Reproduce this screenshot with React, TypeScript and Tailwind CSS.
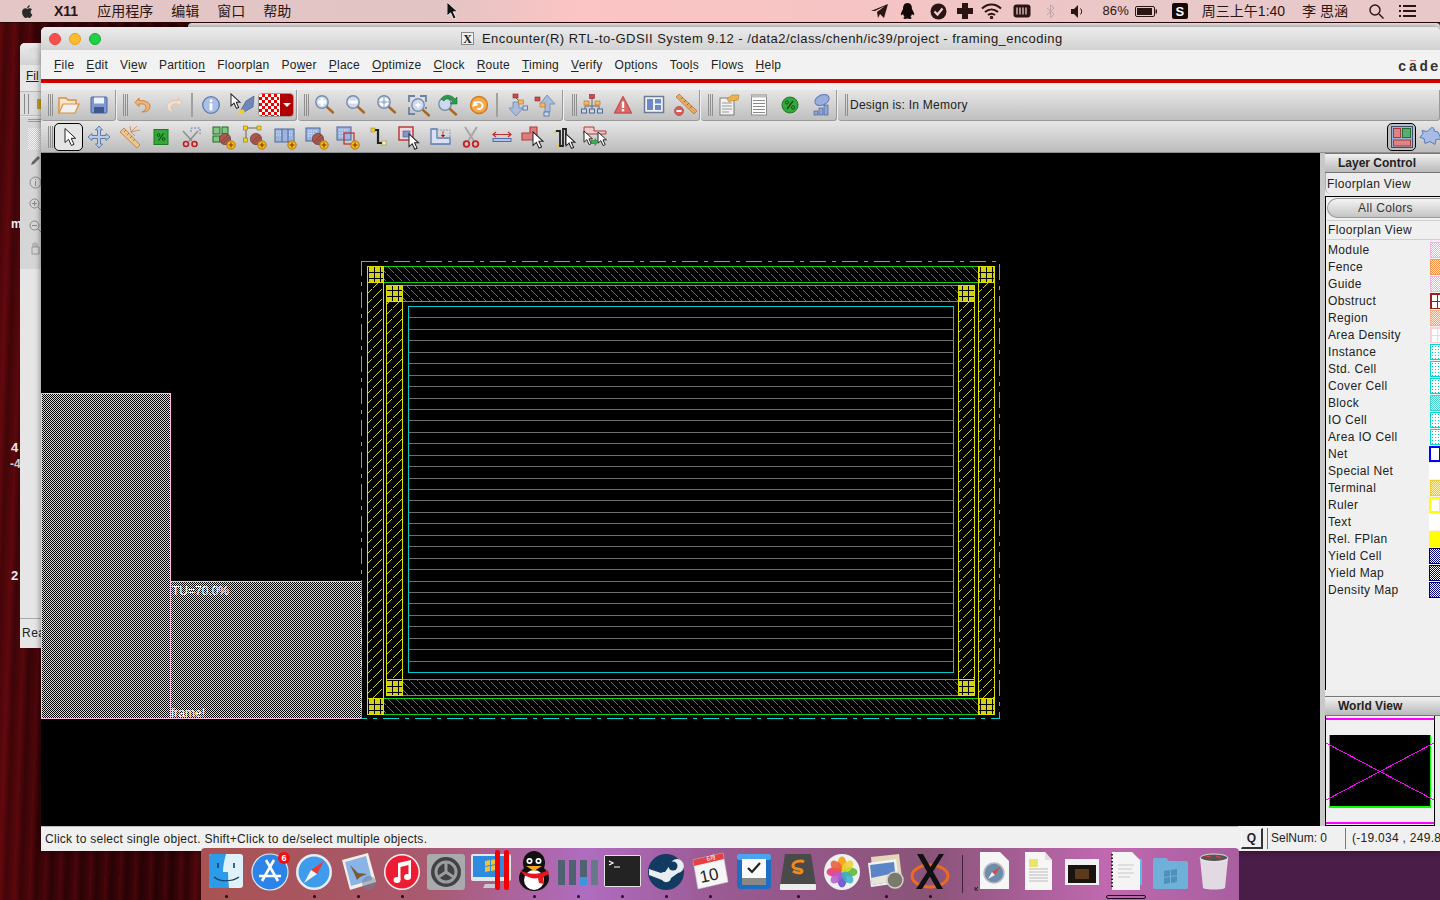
import React, { ReactNode } from 'react';

// shared mouse arrow used in several toolbar glyphs
const arrow = 'M0 0 L0 14 L3.6 10.8 L6.4 17 L9 15.8 L6.2 9.8 L10.6 9.8 Z';

function Cursor({ x, y, s = 1 }: { x: number; y: number; s?: number }) {
  return <path d={arrow} transform={`translate(${x} ${y}) scale(${s})`} fill="#fff" stroke="#222" strokeWidth={1 / s} />;
}

function Plus({ x, y }: { x: number; y: number }) {
  return (
    <g>
      <circle cx={x} cy={y} r="4.2" fill="#f5b915" stroke="#a8620c" strokeWidth="0.8" />
      <path d={`M${x - 2.4} ${y}h4.8M${x} ${y - 2.4}v4.8`} stroke="#7a3f05" strokeWidth="1.1" />
    </g>
  );
}

function Ball({ x = 14, y = 14 }: { x?: number; y?: number }) {
  return (
    <g>
      <circle cx={x} cy={y} r="5.6" fill="#a85a50" stroke="#6d3530" strokeWidth="0.7" />
      <path d={`M${x - 4} ${y + 3}L${x + 3} ${y - 4}M${x - 2} ${y + 4.5}L${x + 4.5} ${y - 2}`} stroke="#7c3a33" strokeWidth="0.8" />
    </g>
  );
}

function Glass({ x = 10, y = 9, children }: { x?: number; y?: number; children?: ReactNode }) {
  return (
    <g>
      <path d={`M${x + 5} ${y + 5}L${x + 11} ${y + 10.5}`} stroke="#a8681f" strokeWidth="2.4" strokeLinecap="round" />
      <circle cx={x} cy={y} r="6.2" fill="#cbdaf0" stroke="#7a8ca8" strokeWidth="1.4" />
      {children}
    </g>
  );
}

const icons: Record<string, ReactNode> = {
  open: (
    <g>
      <path d="M3 20V5h7l2 2h8v4" fill="#fde7c8" stroke="#dd8f3a" strokeWidth="1.4" />
      <path d="M3 20L7 11H23L19 20Z" fill="#eef0f4" stroke="#dd8f3a" strokeWidth="1.2" />
    </g>
  ),
  save: (
    <g>
      <rect x="4" y="4" width="16" height="16" rx="1" fill="#7e98d2" stroke="#4f659c" />
      <rect x="7" y="4.5" width="10" height="6" fill="#eef2fa" />
      <rect x="7" y="14" width="10" height="6" fill="#3f5690" />
    </g>
  ),
  undo: <path d="M8 5L4 9.5 8 13.5V11c5-.6 7 1 7 3.5 0 2-1.4 3.5-4 4.5 5 .2 8-2 8-5.500 0-4-4.400-6.500-11-6V5Z" fill="#eeb37a" stroke="#c77a35" strokeWidth="0.9" />,
  redo: <path d="M16 5l4 4.500L16 13.500V11c-5-.6-7 1-7 3.500 0 2 1.400 3.500 4 4.500-5 .2-8-2-8-5.500 0-4 4.400-6.500 11-6V5Z" fill="#f3dfcd" stroke="#dcc0a6" strokeWidth="0.9" />,
  info: (
    <g>
      <circle cx="12" cy="12" r="8.300" fill="#a9bfe6" stroke="#5f78ad" strokeWidth="1.300" />
      <circle cx="12" cy="7.800" r="1.500" fill="#fff" />
      <rect x="10.600" y="10.300" width="2.800" height="7" fill="#fff" />
    </g>
  ),
  pen: (
    <g>
      <Cursor x={1} y={1} s={0.85} />
      <path d="M24 3L16 8l-5 9 3 2 9-5Z" fill="#6f86b8" stroke="#48608f" strokeWidth="0.7" />
      <path d="M10 18l-2 4 5-2 2-2-3-2Z" fill="#f0cf20" />
    </g>
  ),
  zoomIn: <Glass><path d="M6 9h8M10 5v8" stroke="#fff" strokeWidth="2.800" /></Glass>,
  zoomOut: <Glass><path d="M5.500 9h9" stroke="#fff" strokeWidth="2.800" /></Glass>,
  zoomFit: <Glass><circle cx="10" cy="9" r="3.500" fill="none" stroke="#fff" strokeWidth="2.300" /><path d="M10 4v10M5 9h10" stroke="#8fa7cc" strokeWidth="1" /></Glass>,
  zoomBox: (
    <g>
      <path d="M4 9V3h6M15 3h6v6M21 14v2M4 14v7h6" fill="none" stroke="#6b82a4" strokeWidth="1.800" />
      <path d="M6 5h13v11H6z" fill="#e4ebf5" opacity="0.5" />
      <Glass x={13} y={12}><path d="M10.500 12h5M13 9.500v5" stroke="#fff" strokeWidth="1.800" /></Glass>
    </g>
  ),
  zoomPrev: (
    <g>
      <Glass x={9} y={11} />
      <path d="M5 6C8 1 15 1 19 6l2-2v7h-7l2.500-2.500C14 5 10 5 8 8Z" fill="#2d9a4a" stroke="#1d6f34" strokeWidth="0.6" />
    </g>
  ),
  refresh: (
    <g>
      <circle cx="12" cy="12" r="8.500" fill="#f4a94c" stroke="#d4781e" strokeWidth="1.300" />
      <path d="M8 8.500l-1.500 4 4-1M7.500 11.500c1-3 6.500-3.500 8 0 1 3-2.500 5.500-5.500 4" fill="none" stroke="#fff" strokeWidth="1.800" />
    </g>
  ),
  down: (
    <g>
      <path d="M9 9h6v6h4l-7 8-7-8h4Z" fill="#a9bddb" stroke="#7e93b8" />
      <rect x="9" y="1" width="5" height="4" fill="#d0464e" stroke="#8d2a30" strokeWidth="0.6" />
      <path d="M12 5l4 4" stroke="#666" />
      <rect x="14.500" y="7" width="5" height="4" fill="#f2b56b" stroke="#b47420" strokeWidth="0.6" />
      <rect x="19" y="13" width="4.500" height="4" fill="#cbd8ec" stroke="#4f6a98" strokeWidth="0.8" />
    </g>
  ),
  up: (
    <g>
      <path d="M12 2l8 9h-5v8H10v-8H5Z" fill="#a9bddb" stroke="#7e93b8" />
      <rect x="0" y="4" width="5" height="4" fill="#d0464e" stroke="#8d2a30" strokeWidth="0.6" />
      <rect x="5" y="10" width="5" height="4" fill="#f2b56b" stroke="#b47420" strokeWidth="0.6" />
      <rect x="9" y="19" width="5" height="4" fill="#cbd8ec" stroke="#4f6a98" strokeWidth="0.8" />
    </g>
  ),
  hier: (
    <g>
      <path d="M12 5v4M5 17v-4h14v4M12 9v8" fill="none" stroke="#666" />
      <rect x="9.500" y="1.500" width="5" height="4" fill="#d0464e" stroke="#8d2a30" strokeWidth="0.6" />
      <rect x="4" y="8" width="5" height="4" fill="#f2b56b" stroke="#b47420" strokeWidth="0.6" />
      <rect x="15" y="8" width="5" height="4" fill="#f2b56b" stroke="#b47420" strokeWidth="0.6" />
      <rect x="1.500" y="16" width="5" height="4" fill="#cbd8ec" stroke="#4f6a98" />
      <rect x="9.500" y="16" width="5" height="4" fill="#cbd8ec" stroke="#4f6a98" />
      <rect x="17.500" y="16" width="5" height="4" fill="#cbd8ec" stroke="#4f6a98" />
    </g>
  ),
  warn: (
    <g>
      <path d="M12 3.500L20.500 20H3.500Z" fill="#dd6666" stroke="#c45454" strokeWidth="1.400" strokeLinejoin="round" />
      <rect x="10.800" y="8.500" width="2.400" height="6.500" fill="#fff" />
      <rect x="10.800" y="16" width="2.400" height="2.400" fill="#fff" />
    </g>
  ),
  layout: (
    <g>
      <rect x="2.500" y="3.500" width="19" height="16" fill="#eef1f6" stroke="#6d7c92" strokeWidth="1.500" />
      <rect x="5" y="6" width="6" height="11" fill="#6c8ac6" />
      <rect x="13" y="6" width="6" height="4.500" fill="#6c8ac6" />
      <rect x="13" y="12" width="6" height="5" fill="#6c8ac6" />
    </g>
  ),
  rulerDel: (
    <g>
      <path d="M6 1l18 17-3 3L3 4Z" fill="#e6a866" stroke="#b87a38" strokeWidth="0.8" />
      <path d="M8 6l2-2M11 9l2-2M14 12l2-2M17 15l2-2" stroke="#a56a2c" />
      <circle cx="6" cy="18" r="4.500" fill="#dc5b5b" stroke="#aa3d3d" strokeWidth="0.7" />
      <rect x="3.500" y="17" width="5" height="2" fill="#fff" />
    </g>
  ),
  note: (
    <g>
      <rect x="4" y="5" width="14" height="17" fill="#f2f2f2" stroke="#7c7c7c" />
      <path d="M6 10h10M6 13h10M6 16h10M6 19h7" stroke="#9a9a9a" />
      <path d="M11 6L16 2h7l-1 5-7 1-2 1Z" fill="#eeb24c" stroke="#b77b1f" strokeWidth="0.6" />
    </g>
  ),
  list: (
    <g>
      <rect x="4.500" y="2" width="15" height="20" fill="#fff" stroke="#8b8b8b" />
      <rect x="4.500" y="2" width="15" height="2.500" fill="#bbb" />
      <path d="M6 7.500h12M6 10.500h12M6 13.500h12M6 16.500h12M6 19.500h12" stroke="#8a8a8a" />
    </g>
  ),
  percentRound: (
    <g>
      <circle cx="12" cy="12" r="8" fill="#35a83c" stroke="#1f7a26" />
      <path d="M9 16l6-8" stroke="#0f4f15" strokeWidth="1.300" />
      <circle cx="9" cy="9.500" r="1.600" fill="none" stroke="#0f4f15" />
      <circle cx="15" cy="14.500" r="1.600" fill="none" stroke="#0f4f15" />
    </g>
  ),
  ovals: (
    <g>
      <ellipse cx="13" cy="7" rx="7.500" ry="5" transform="rotate(-25 13 7)" fill="#9aaedb" stroke="#6079b4" />
      <rect x="5" y="18" width="4" height="4" fill="#8ea6d6" stroke="#3f5690" strokeWidth="0.6" />
      <rect x="10" y="15" width="4" height="7" fill="#8ea6d6" stroke="#3f5690" strokeWidth="0.6" />
      <rect x="15" y="12" width="4" height="10" fill="#8ea6d6" stroke="#3f5690" strokeWidth="0.6" />
    </g>
  ),
  select: <Cursor x={8} y={3.500} s={1} />,
  move: (
    <path d="M12 1l3.500 4H13.500v5.500H19V8.500l4 3.500-4 3.500V13.500H13.500V19h2L12 23l-3.500-4h2V13.500H5v2L1 12l4-3.500v2h5.500V5h-2Z" fill="#b9cbe6" stroke="#56759f" strokeWidth="0.9" />
  ),
  ruler: (
    <g>
      <path d="M2 7L6 3l16 17-3 3Z" fill="#edc48e" stroke="#bb8038" strokeWidth="0.8" />
      <path d="M6 7l2-2M9 10l2-2M12 13l2-2M15 16l2-2" stroke="#b67a36" />
      <path d="M13 7l6-6M13 7l9-2M13 7l4 4M13 7l-1-6" stroke="#c9743a" strokeWidth="0.7" />
    </g>
  ),
  percent: (
    <g>
      <rect x="5" y="4.500" width="14" height="15" fill="#35a83c" stroke="#1f7a26" />
      <path d="M9.500 15.500l5-7" stroke="#0f4f15" strokeWidth="1.200" />
      <circle cx="9.500" cy="10" r="1.400" fill="none" stroke="#0f4f15" />
      <circle cx="14.500" cy="14" r="1.400" fill="none" stroke="#0f4f15" />
    </g>
  ),
  scissorsDash: (
    <g>
      <path d="M11 7V3h9v6" fill="none" stroke="#5d7aa8" strokeDasharray="2 1.500" />
      <path d="M3 6l9 10M18 6L9 16" stroke="#8e8e8e" strokeWidth="1.600" />
      <circle cx="6" cy="19" r="2.500" fill="none" stroke="#c61c1c" strokeWidth="1.600" />
      <circle cx="14.500" cy="19" r="2.500" fill="none" stroke="#c61c1c" strokeWidth="1.600" />
    </g>
  ),
  addGroup: (
    <g>
      <rect x="2" y="2" width="7" height="7" fill="#7fc77f" stroke="#1f6b2a" />
      <rect x="11" y="2" width="6" height="7" fill="#7fc77f" stroke="#1f6b2a" />
      <rect x="2" y="11" width="7" height="6" fill="#7fc77f" stroke="#1f6b2a" />
      <Ball />
      <Plus x={20} y={20} />
    </g>
  ),
  addHandles: (
    <g>
      <path d="M4 3h13M4 3v11" stroke="#333" strokeWidth="0.700" />
      <rect x="1.500" y="1" width="4" height="4" fill="#efd21c" stroke="#7d6b08" strokeWidth="0.5" />
      <rect x="15" y="1" width="4" height="4" fill="#efd21c" stroke="#7d6b08" strokeWidth="0.5" />
      <rect x="1.500" y="13" width="4" height="4" fill="#efd21c" stroke="#7d6b08" strokeWidth="0.5" />
      <Ball />
      <Plus x={20} y={20} />
    </g>
  ),
  addColumns: (
    <g>
      <rect x="2" y="4" width="19" height="13" fill="#9db4de" stroke="#4b679e" />
      <path d="M9 4v13M15 4v13" stroke="#4b679e" />
      <path d="M3 7h5M3 10h5M16 7h4M16 10h4" stroke="#e3ebf8" strokeDasharray="1 1" />
      <Plus x={19} y={20} />
    </g>
  ),
  addBlock: (
    <g>
      <rect x="2" y="3" width="14" height="13" fill="#9db4de" stroke="#4b679e" />
      <path d="M4 6h9M4 8.500h6M4 11h4" stroke="#e3ebf8" strokeDasharray="1.500 1" />
      <Ball />
      <Plus x={20} y={20} />
    </g>
  ),
  addBox: (
    <g>
      <rect x="2" y="2" width="14" height="13" fill="#9db4de" stroke="#4b679e" />
      <path d="M4 5h9M4 8h6M4 11h4" stroke="#e3ebf8" strokeDasharray="1.500 1" />
      <rect x="9" y="8" width="10" height="11" fill="none" stroke="#c02a2a" strokeWidth="1.200" />
      <Plus x={20} y={20} />
    </g>
  ),
  wire: (
    <g>
      <path d="M8 5h4v13h5" fill="none" stroke="#222" strokeWidth="2.200" />
      <rect x="5" y="3" width="4" height="4" fill="#efd21c" stroke="#7d6b08" strokeWidth="0.4" />
      <rect x="16" y="16" width="4" height="4" fill="#fff1a8" stroke="#7d6b08" strokeWidth="0.4" />
    </g>
  ),
  boxArrow: (
    <g>
      <rect x="2" y="2" width="14" height="13" fill="#f0d7d7" stroke="#b83232" strokeWidth="1.400" />
      <rect x="6" y="6" width="7" height="6" fill="#7d96cc" stroke="#3d5590" strokeWidth="0.6" />
      <Cursor x={12} y={9} s={0.9} />
    </g>
  ),
  notch: (
    <g>
      <path d="M3 4v15h19v-6H9V4Z" fill="#d8e1f1" stroke="#5d7ab0" strokeWidth="1.300" />
      <rect x="9" y="5" width="13" height="8" fill="none" stroke="#8aa0c6" strokeDasharray="2 1" />
      <path d="M15 6v6M13 10l2 2 2-2" stroke="#c33" />
    </g>
  ),
  scissors: (
    <g>
      <path d="M6 2l9 14M18 2L9 16" stroke="#a7a7a7" strokeWidth="2" />
      <circle cx="7.500" cy="19" r="2.800" fill="none" stroke="#c92020" strokeWidth="1.800" />
      <circle cx="16.500" cy="19" r="2.800" fill="none" stroke="#c92020" strokeWidth="1.800" />
    </g>
  ),
  stretch: (
    <g>
      <rect x="3" y="13.500" width="18" height="3" fill="#b4c6e6" stroke="#4f6da8" />
      <path d="M3 9.500h18M6 7l-3 2.500L6 12M18 7l3 2.500L18 12" fill="none" stroke="#c52d2d" strokeWidth="1.200" />
    </g>
  ),
  lShape: (
    <g>
      <path d="M1 15V8h8V2h7v13Z" fill="#da7f7f" stroke="#b23a3a" strokeWidth="1.100" />
      <Cursor x={12} y={7} s={0.95} />
    </g>
  ),
  wireSnake: (
    <g>
      <path d="M4 6h4v15h3V4h3v16" fill="none" stroke="#222" strokeWidth="1.800" />
      <path d="M1 8l3-3v3ZM4 21l3-2v3Z" fill="#e2c92c" />
      <Cursor x={14} y={9} s={0.85} />
    </g>
  ),
  moveTwo: (
    <g>
      <path d="M1 2h10v4h12v3H1Z" fill="#eccaca" stroke="#b33a3a" />
      <Cursor x={1} y={6} s={0.8} />
      <Cursor x={15} y={7} s={0.8} />
      <path d="M8 15.500h4v-2l3 3.500-3 3.500v-2H8Z" fill="#38b249" stroke="#1b6d28" strokeWidth="0.5" />
    </g>
  ),
  panels: (
    <g>
      <rect x="1.500" y="1.500" width="21" height="21" fill="#9bb2d8" stroke="#3d4f70" />
      <rect x="3.500" y="3.500" width="7" height="9" fill="#dd8585" stroke="#a63a3a" />
      <rect x="12.500" y="3.500" width="8" height="9" fill="#58ad6c" stroke="#256b38" />
      <rect x="3.500" y="15" width="17" height="6" fill="#dd8585" stroke="#a63a3a" />
    </g>
  ),
  puzzle: <path d="M12 4c2-3 5-1 4 2l4 1 3 7-5 .5-1 5-5-3-5 2-1-5-4-1 3-4-1-3 5 1Z" fill="#a7bce6" stroke="#5f7bb2" />,
};

function Icon({ name }: { name: string }) {
  return (
    <svg width="24" height="24" viewBox="0 0 24 24" className="block overflow-visible">
      {icons[name]}
    </svg>
  );
}

function Slot({ name }: { name: string }) {
  return (
    <div className="flex h-[31px] w-[31px] shrink-0 items-center justify-center">
      <Icon name={name} />
    </div>
  );
}

function Grip() {
  return (
    <div className="-mr-[1px] flex h-[22px] w-[5px] shrink-0 justify-between">
      <i className="w-px bg-[#8f8f8f]" />
      <i className="w-px bg-[#8f8f8f]" />
      <i className="w-px bg-[#8f8f8f]" />
    </div>
  );
}

function Sep() {
  return <div className="mx-[2px] h-[24px] w-[2px] shrink-0 bg-[#a0a0a0]" />;
}

function Section({ className, children }: { className: string; children: ReactNode }) {
  return (
    <div className={`flex h-[31px] shrink-0 items-center rounded-b-[3px] border-r border-b border-[#9a9a9a] bg-[linear-gradient(#e6e6e6,#bfbfbf)] ${className}`}>
      {children}
    </div>
  );
}

const menus = [
  ['', 'F', 'ile'],
  ['', 'E', 'dit'],
  ['Vi', 'e', 'w'],
  ['Partitio', 'n', ''],
  ['Floorpl', 'a', 'n'],
  ['Po', 'w', 'er'],
  ['', 'P', 'lace'],
  ['', 'O', 'ptimize'],
  ['', 'C', 'lock'],
  ['', 'R', 'oute'],
  ['', 'T', 'iming'],
  ['', 'V', 'erify'],
  ['Opt', 'i', 'ons'],
  ['Too', 'l', 's'],
  ['Flow', 's', ''],
  ['', 'H', 'elp'],
];

function Window() {
  return (
    <div className="absolute top-[27px] left-[41px] z-10 flex h-[824px] w-[1399px] flex-col overflow-hidden rounded-t-[5px] bg-[#efefef] shadow-[0_0_6px_rgba(0,0,0,0.5)]">
      {/* title bar */}
      <div className="relative flex h-[23px] shrink-0 items-center bg-[linear-gradient(#ececec,#d2d2d2)]">
        <div className="ml-[8px] flex gap-[8px]">
          <i className="h-[12px] w-[12px] rounded-full border border-[#e0443e] bg-[#fc4f4a]" />
          <i className="h-[12px] w-[12px] rounded-full border border-[#dea123] bg-[#fdbb2d]" />
          <i className="h-[12px] w-[12px] rounded-full border border-[#1aab29] bg-[#1fd04a]" />
        </div>
        <div className="ml-[360px] flex h-[13px] w-[13px] items-center justify-center border border-[#888] bg-[#f0f0f0] text-[12px] leading-none font-bold text-[#222] [font-family:'Liberation_Serif',serif]">
          X
        </div>
        <div className="ml-[8px] text-[13px] tracking-[0.44px] whitespace-nowrap text-[#1a1a1a]">
          Encounter(R) RTL-to-GDSII System 9.12 - /data2/class/chenh/ic39/project - framing_encoding
        </div>
      </div>

      {/* menu */}
      <div className="flex h-[29px] shrink-0 items-center justify-between bg-[#f2f2f2] pl-[13px]">
        <div className="flex gap-[12px] text-[12px] tracking-[0.25px] text-[#222]">
          {menus.map(([a, u, b]) => (
            <span key={a + u + b}>
              {a}
              <span className="underline underline-offset-2">{u}</span>
              {b}
            </span>
          ))}
        </div>
        <div className="w-[42px] overflow-hidden pt-[5px] text-[14px] font-bold tracking-[2.3px] whitespace-nowrap text-[#333] [font-family:'Liberation_Mono',monospace]">
          c<span className="relative">a<i className="absolute top-[1px] left-[1px] h-[1px] w-[6px] bg-[#e08080]" /></span>dence
        </div>
      </div>
      <div className="h-[4px] shrink-0 bg-[#d00000]" />
      <div className="h-[7px] shrink-0 bg-[#efefef]" />

      {/* toolbar one */}
      <div className="flex h-[31px] shrink-0 items-center gap-px">
        <Section className="w-[75px] pl-[7px]">
          <Grip />
          <Slot name="open" />
          <Slot name="save" />
        </Section>
        <Section className="w-[180px] pl-[6px]">
          <Grip />
          <Slot name="undo" />
          <Slot name="redo" />
          <Sep />
          <Slot name="info" />
          <Slot name="pen" />
          <div className="ml-px flex h-[24px] w-[36px] shrink-0 overflow-hidden rounded-[4px] border border-[#999]">
            <div className="w-[21px] border-r border-white bg-[repeating-conic-gradient(#e80000_0_25%,#fff_0_50%)] bg-[length:6px_6px]" />
            <div className="flex flex-1 items-center justify-center bg-[#b00000]">
              <i className="h-0 w-0 border-x-[4px] border-t-[4px] border-x-transparent border-t-white" />
            </div>
          </div>
        </Section>
        <Section className="w-[265px] pl-[6px]">
          <Grip />
          <Slot name="zoomIn" />
          <Slot name="zoomOut" />
          <Slot name="zoomFit" />
          <Slot name="zoomBox" />
          <Slot name="zoomPrev" />
          <Slot name="refresh" />
          <Sep />
          <Slot name="down" />
          <Slot name="up" />
        </Section>
        <Section className="w-[136px] pl-[8px]">
          <Grip />
          <Slot name="hier" />
          <Slot name="warn" />
          <Slot name="layout" />
          <Slot name="rulerDel" />
        </Section>
        <Section className="w-[136px] pl-[7px]">
          <Grip />
          <Slot name="note" />
          <Slot name="list" />
          <Slot name="percentRound" />
          <Slot name="ovals" />
        </Section>
        <Section className="flex-1 pl-[7px] text-[12px] tracking-[0.25px] text-[#222]">
          <div className="mr-[1px] flex h-[22px] w-[3px] shrink-0 justify-between">
            <i className="w-px bg-[#8f8f8f]" />
            <i className="w-px bg-[#8f8f8f]" />
          </div>
          <span className="ml-[1px]">Design is: In Memory</span>
        </Section>
      </div>

      {/* toolbar two */}
      <div className="flex h-[32px] shrink-0 items-center justify-between border-b border-[#8f8f8f] bg-[linear-gradient(#e6e6e6,#bcbcbc)] pl-[7px]">
        <div className="flex items-center">
          <Grip />
          <div className="ml-[2px] flex h-[28px] w-[29px] shrink-0 items-center justify-center rounded-[5px] border border-black bg-[#e4e4e4]">
            <Icon name="select" />
          </div>
          <div className="flex">
            {['move', 'ruler', 'percent', 'scissorsDash', 'addGroup', 'addHandles', 'addColumns', 'addBlock', 'addBox', 'wire', 'boxArrow', 'notch', 'scissors', 'stretch', 'lShape', 'wireSnake', 'moveTwo'].map((n) => (
              <Slot key={n} name={n} />
            ))}
          </div>
        </div>
        <div className="flex items-center">
          <div className="flex h-[28px] w-[29px] items-center justify-center rounded-[5px] border border-black bg-[#bdbdbd]">
            <Icon name="panels" />
          </div>
          <div className="ml-[2px] w-[22px]">
            <Icon name="puzzle" />
          </div>
        </div>
      </div>

      {/* work area */}
      <div className="flex min-h-0 flex-1">
        <Floorplan />
        <SidePanel />
      </div>

      {/* status bar */}
      <div className="flex h-[25px] shrink-0 items-center bg-[#f0f0f0] text-[12px] tracking-[0.28px] text-[#222]">
        <div className="h-full w-[1197px] border-t border-[#bbb] pl-[4px] leading-[24px] whitespace-nowrap">
          Click to select single object. Shift+Click to de/select multiple objects.
        </div>
        <div className="mx-[3px] flex h-[21px] w-[22px] items-center justify-center border-t border-r-2 border-b-2 border-l border-[#f8f8f8] border-r-[#333] border-b-[#333] font-bold">
          Q
        </div>
        <div className="ml-[1px] h-[21px] w-[75px] border-l border-[#777] pl-[3px] leading-[21px] tracking-[0px] whitespace-nowrap">SelNum: 0</div>
        <div className="ml-[3px] h-[21px] flex-1 overflow-hidden border-l border-[#777] pl-[6px] leading-[21px] whitespace-nowrap">(-19.034 , 249.8</div>
      </div>
    </div>
  );
}

function Floorplan() {
  return (
    <div className="h-full w-[1279px] shrink-0 bg-black">
      <svg width="1279" height="673" viewBox="41 153 1279 673" className="block" shapeRendering="crispEdges">
        <defs>
          <pattern id="macro" width="2" height="2" patternUnits="userSpaceOnUse">
            <rect width="2" height="2" fill="#ffc4e4" />
            <rect width="1" height="1" fill="#000" />
            <rect x="1" y="1" width="1" height="1" fill="#000" />
          </pattern>
          <pattern id="greenHatch" width="8" height="8" patternUnits="userSpaceOnUse" patternTransform="translate(1 0)">
            <path d="M0 0L8 8" stroke="#12b012" strokeDasharray="2 1" />
          </pattern>
          <pattern id="yellowHatch" width="10" height="10" patternUnits="userSpaceOnUse" patternTransform="translate(1 0)">
            <path d="M0 10L10 0" stroke="#d8d820" strokeDasharray="2 1" />
          </pattern>
          <pattern id="pad" width="6" height="6" patternUnits="userSpaceOnUse">
            <rect width="6" height="6" fill="#d2d214" />
            <path d="M2.500 0v6M0 2.500h6" stroke="#000" />
          </pattern>
        </defs>

        {/* macro block */}
        <path d="M41.500 393.500H170.500V581.500H361.500V718.500H41.500Z" fill="url(#macro)" stroke="#ffb8e8" />
        <path d="M170.500 581.500V718.500" stroke="#ffb8e8" />
        <text x="172" y="595" fill="#fff" fontSize="12" fontFamily="Liberation Sans, sans-serif" shapeRendering="auto">TU=70.0%</text>
        <text x="171" y="717" fill="#fff" fontSize="12" fontFamily="Liberation Sans, sans-serif" shapeRendering="auto">frame!</text>

        {/* core boundary */}
        <rect x="361.500" y="261.500" width="638" height="457" fill="none" stroke="#00d8d8" strokeDasharray="16 6 4 6" />

        {/* outer power ring */}
        <rect x="383" y="266.500" width="595" height="16" fill="url(#greenHatch)" stroke="#10d010" />
        <rect x="383" y="698.500" width="595" height="16" fill="url(#greenHatch)" stroke="#10d010" />
        <rect x="367.500" y="282" width="16" height="416" fill="url(#yellowHatch)" stroke="#e0e000" />
        <rect x="978.500" y="282" width="16" height="416" fill="url(#yellowHatch)" stroke="#e0e000" />

        {/* inner power ring */}
        <rect x="402" y="285.500" width="556" height="16" fill="url(#greenHatch)" stroke="#10d010" />
        <rect x="402" y="679.500" width="556" height="16" fill="url(#greenHatch)" stroke="#10d010" />
        <rect x="386.500" y="301" width="16" height="378" fill="url(#yellowHatch)" stroke="#e0e000" />
        <rect x="958.500" y="301" width="16" height="378" fill="url(#yellowHatch)" stroke="#e0e000" />

        {/* ring via stacks */}
        {[
          [367, 266], [978, 266], [367, 698], [978, 698],
          [386, 285], [958, 285], [386, 679], [958, 679],
        ].map(([x, y]) => (
          <rect key={`${x}-${y}`} x={x + 0.5} y={y + 0.5} width="16" height="16" fill="url(#pad)" stroke="#e0e000" />
        ))}

        {/* standard cell rows */}
        {Array.from({ length: 31 }, (_, i) => {
          const y = Math.round(306 + (i + 1) * 11.44) + 0.5;
          return <path key={i} d={`M409 ${y}H953`} stroke="#6e6e6e" />;
        })}
        <rect x="408.500" y="306.500" width="545" height="366" fill="none" stroke="#00c8c8" />
      </svg>
    </div>
  );
}

const swatchDots = 'bg-[radial-gradient(#00c8c8_0.6px,#fff_0.7px)] bg-[length:3px_3px]';
const swatchGrid = 'bg-white bg-[linear-gradient(currentColor_1px,transparent_1px),linear-gradient(90deg,currentColor_1px,transparent_1px)] bg-[length:6px_7px]';

const layers: [string, string][] = [
  ['Module', 'border border-[#f5b5e5] bg-[repeating-conic-gradient(#f4a8e2_0_25%,#fff_0_50%)] bg-[length:2px_2px]'],
  ['Fence', 'border border-[#fb9b58] bg-[repeating-conic-gradient(#fb8f40_0_25%,#ffe8d8_0_50%)] bg-[length:2px_2px]'],
  ['Guide', 'border border-[#f5b5e5] bg-[repeating-conic-gradient(#f4a8e2_0_25%,#fff_0_50%)] bg-[length:2px_2px]'],
  ['Obstruct', `border border-[#a02020] text-[#a02020] ${swatchGrid}`],
  ['Region', 'border border-[#f2b48a] bg-[repeating-conic-gradient(#eda878_0_25%,#ffe8d8_0_50%)] bg-[length:2px_2px]'],
  ['Area Density', `border border-[#fbd0d8] text-[#fbd0d8] ${swatchGrid}`],
  ['Instance', `border border-[#00d8d8] ${swatchDots}`],
  ['Std. Cell', `border border-[#00d8d8] ${swatchDots}`],
  ['Cover Cell', `border border-[#00d8d8] ${swatchDots}`],
  ['Block', 'border border-[#40d4d0] bg-[repeating-conic-gradient(#50d0cc_0_25%,#c8f0f0_0_50%)] bg-[length:2px_2px]'],
  ['IO Cell', `border border-[#00d8d8] ${swatchDots}`],
  ['Area IO Cell', `border border-[#00d8d8] ${swatchDots}`],
  ['Net', '-ml-px border-2 border-[#0000ff] bg-white'],
  ['Special Net', '-ml-px bg-white'],
  ['Terminal', 'border border-[#f2cc30] bg-[repeating-conic-gradient(#f0c820_0_25%,#fff3b0_0_50%)] bg-[length:2px_2px]'],
  ['Ruler', '-ml-px border-2 border-[#ffff00] bg-white'],
  ['Text', '-ml-px bg-white'],
  ['Rel. FPlan', '-ml-px bg-[#ffff00]'],
  ['Yield Cell', '-ml-px border border-[#000080] bg-[repeating-conic-gradient(#000080_0_25%,#fff_0_50%)] bg-[length:2px_2px]'],
  ['Yield Map', '-ml-px border border-[#000080] bg-[repeating-conic-gradient(#000080_0_25%,#fff_0_50%)] bg-[length:2px_2px]'],
  ['Density Map', '-ml-px border border-[#000080] bg-[repeating-conic-gradient(#000080_0_25%,#fff_0_50%)] bg-[length:2px_2px]'],
];

function SidePanel() {
  return (
    <div className="flex min-w-0 flex-1 border-l-[5px] border-[#c8c8c8] bg-[#ececec] text-[12px] tracking-[0.35px] text-[#222]">
      <div className="flex w-[120px] shrink-0 flex-col">
        <div className="flex h-[20px] shrink-0 items-center border-y border-[#777] bg-[linear-gradient(#f0f0f0,#b8b8b8)] pl-[13px] font-bold tracking-[0px]">
          Layer Control
        </div>
        <div className="h-[21px] shrink-0 rounded-b-[6px] border-l border-[#aaa] pl-[1px] leading-[23px]">Floorplan View</div>
        <div className="mt-[2px] flex h-[494px] shrink-0 flex-col border-t border-l border-black bg-[#f0f0f0] pl-[1px]">
          <div className="mt-[1px] flex h-[20px] shrink-0 items-center justify-center rounded-l-[10px] border border-r-0 border-[#999] bg-[linear-gradient(#f4f4f4,#c4c4c4)] pr-[2px] text-[#333]">
            All Colors
          </div>
          <div className="mt-[2px] h-[20px] shrink-0 border-y border-[#cfcfcf] pl-[1px] leading-[18px]">Floorplan View</div>
          <div className="mt-[1px] flex flex-col">
            {layers.map(([label, swatch]) => (
              <div key={label} className="flex h-[17px] items-center pl-[1px]">
                <span className="w-[102px] shrink-0 whitespace-nowrap">{label}</span>
                <i className={`block h-[16px] w-[12px] shrink-0 ${swatch}`} />
              </div>
            ))}
          </div>
        </div>
        <div className="mt-[6px] flex h-[20px] shrink-0 items-center border-y border-[#777] bg-[linear-gradient(#f0f0f0,#b8b8b8)] pl-[13px] font-bold tracking-[0px]">
          World View
        </div>
        <div className="h-[110px] w-[110px] shrink-0 border-x border-b border-black bg-[#f0f0f0]">
          <svg width="108" height="109" viewBox="1326 716 108 109" className="block" shapeRendering="crispEdges">
            <rect x="1326" y="718" width="108" height="2" fill="#ff00ff" />
            <rect x="1326" y="822" width="108" height="2" fill="#ff00ff" />
            <rect x="1330" y="735" width="101" height="72" fill="#000" />
            <rect x="1329" y="735" width="1" height="72" fill="#00ff00" />
            <rect x="1430" y="735" width="1" height="72" fill="#00ff00" />
            <rect x="1329" y="806" width="102" height="2" fill="#00ff00" />
            <path d="M1326 743L1434 800M1326 800L1434 743" stroke="#ff00ff" />
          </svg>
        </div>
      </div>
    </div>
  );
}

function BackWindow() {
  return (
    <div className="absolute top-[43px] left-[20px] flex h-[605px] w-[30px] flex-col overflow-hidden rounded-t-[5px] bg-[#e6e6e6] text-[12px] text-[#222]">
      <div className="h-[22px] shrink-0 bg-[linear-gradient(#ececec,#d2d2d2)] pt-[4px] pl-[8px]">
        <i className="block h-[12px] w-[12px] rounded-full bg-[#dedede]" />
      </div>
      <div className="h-[22px] shrink-0 pl-[6px] leading-[22px] underline">Fil</div>
      <div className="h-[4px] shrink-0" />
      <div className="flex h-[25px] shrink-0 items-center gap-[8px] border-y border-[#bbb] bg-[#ddd] pl-[4px]">
        <div className="flex h-[20px] w-[5px] justify-between">
          <i className="w-px bg-[#888]" />
          <i className="w-px bg-[#888]" />
        </div>
        <i className="h-[10px] w-[10px] bg-[#c0a020]" />
      </div>
      <div className="mt-[1px] flex flex-col items-center gap-[9px] bg-[#d6d6d6] pt-[2px] pr-[4px] pb-[14px] pl-[4px]">
        <div className="-mb-[3px] h-[3px] w-[15px] border-y border-[#999]" />
        <div className="-mb-[4px] h-[22px] w-[15px] bg-[repeating-conic-gradient(#ccc_0_25%,#f4f4f4_0_50%)] bg-[length:2px_2px]" />
        <svg width="12" height="12" viewBox="0 0 12 12"><path d="M2 10l1-3 6-6 2 2-6 6Z" fill="#666" /></svg>
        <svg width="13" height="13" viewBox="0 0 13 13"><circle cx="6.500" cy="6.500" r="5.500" fill="none" stroke="#888" /><path d="M6.500 5v5M6.500 3v1" stroke="#888" /></svg>
        <svg width="13" height="13" viewBox="0 0 13 13"><circle cx="5.500" cy="5.500" r="4.500" fill="none" stroke="#888" /><path d="M9 9l3 3M3 5.500h5M5.500 3v5" stroke="#888" /></svg>
        <svg width="13" height="13" viewBox="0 0 13 13"><circle cx="5.500" cy="5.500" r="4.500" fill="none" stroke="#888" /><path d="M9 9l3 3M3 5.500h5" stroke="#888" /></svg>
        <svg width="13" height="13" viewBox="0 0 13 13"><path d="M3 12V5h7v7ZM4 5V1M6 5V0M8 5V1" stroke="#999" fill="none" /></svg>
      </div>
      <div className="flex-1 bg-[#e6e6e6]" />
      <div className="h-[30px] shrink-0 border-t border-[#aaa] pt-[5px] pl-[2px] tracking-[0.5px]">Rea</div>
    </div>
  );
}

function MenuBar() {
  return (
    <div className="absolute inset-x-0 top-0 z-20 flex h-[23px] items-center border-b border-[#2b0506] bg-[linear-gradient(90deg,#e4c6c6,#e2c4c4_30%,#fcc4c4_40%,#f6c4c4_60%,#e8c8c8_80%,#e8c8c8)] pl-[20px] text-[14px] whitespace-nowrap text-[#2a1512]">
      <svg width="15" height="17" viewBox="0 0 24 24" fill="#2a2a2a" className="shrink-0">
        <path d="M17 12.700c0-2.500 2-3.700 2.100-3.800-1.200-1.700-3-1.900-3.600-2-1.500-.2-3 .9-3.800.9s-2-.9-3.300-.9C6.700 7 5.100 8 4.200 9.500c-1.800 3.100-.5 7.700 1.300 10.200.9 1.200 1.900 2.600 3.200 2.500 1.300-.1 1.800-.8 3.300-.8s2 .8 3.300.8c1.400 0 2.300-1.200 3.100-2.500 1-1.400 1.400-2.800 1.400-2.900-.1 0-2.800-1.100-2.800-4.100ZM14.600 5.200c.7-.8 1.200-2 1-3.200-1 0-2.300.7-3 1.500-.7.700-1.200 1.900-1.100 3.100 1.200.1 2.400-.6 3.100-1.400Z" />
      </svg>
      <span className="ml-[19px] font-bold">X11</span>
      <span className="ml-[19px]">应用程序</span>
      <span className="ml-[18px]">编辑</span>
      <span className="ml-[18px]">窗口</span>
      <span className="ml-[18px]">帮助</span>

      <div className="ml-auto flex items-center pr-[24px]">
        <svg width="17" height="15" viewBox="0 0 17 15" fill="#2a1512"><path d="M0 7L17 0l-4 14-4-4-2 4-1-6 8-6-10 5Z" /></svg>
        <svg className="ml-[11px]" width="17" height="17" viewBox="0 0 17 17" fill="#170808"><path d="M8.500 0C5 0 4 3 4 6L2 10c-.5 2 .5 2.500 1 2l1-1c.5 1.500 1 2.200 1.500 2.800C4 14.500 4 16 6 16c1 0 1.800-.4 2.500-.4S10 16 11 16c2 0 2-1.500.5-2.200.5-.6 1-1.300 1.500-2.800l1 1c.5.500 1.500 0 1-2l-2-4c0-3-1-6-4.500-6Z" /></svg>
        <svg className="ml-[14px]" width="17" height="17" viewBox="0 0 17 17"><circle cx="8.500" cy="8.500" r="8" fill="#2a1512" /><path d="M4.500 8.500l3 3 5-6" fill="none" stroke="#f2d0d0" strokeWidth="2.200" /></svg>
        <svg className="ml-[10px]" width="16" height="16" viewBox="0 0 16 16" fill="#2a1512"><path d="M5 0h6v5h5v6h-5v5H5v-5H0V5h5Z" /></svg>
        <svg className="ml-[8px]" width="21" height="16" viewBox="0 0 21 16" fill="none" stroke="#2a1512" strokeWidth="2"><path d="M1 5.500C6.500 0 14.500 0 20 5.500M4 9c4-3.500 9-3.500 13 0M7 12c2-1.500 5-1.500 7 0" /><circle cx="10.500" cy="14.500" r="0.700" /></svg>
        <svg className="ml-[11px]" width="18" height="14" viewBox="0 0 18 14"><rect x="0.500" y="0.500" width="17" height="13" rx="3" fill="#2a1512" /><path d="M4 3.500v7M7 3.500v7M10 3.500v7M13 3.500v7" stroke="#e8c8c8" strokeWidth="1.300" /></svg>
        <svg className="ml-[16px]" width="8" height="15" viewBox="0 0 8 15" fill="none" stroke="#b9a5a5"><path d="M0 4l7 6-3.500 4V1L7 4 0 11" /></svg>
        <svg className="ml-[16px]" width="14" height="13" viewBox="0 0 14 13"><path d="M0 4h3l4-4v13l-4-4H0Z" fill="#2a1512" /><path d="M9.500 3.500c1.500 1.500 1.500 4.500 0 6" fill="none" stroke="#2a1512" /></svg>
        <span className="ml-[18px] text-[13px] tracking-[0.1px]">86%</span>
        <svg className="ml-[6px]" width="22" height="11" viewBox="0 0 22 11"><rect x="0.500" y="0.500" width="19" height="10" rx="1.500" fill="#e8c8c8" stroke="#2a1512" /><rect x="2" y="2" width="15" height="7" fill="#2a1512" /><rect x="20.500" y="3.500" width="1.500" height="4" fill="#2a1512" /></svg>
        <div className="ml-[15px] flex h-[16px] w-[16px] items-center justify-center rounded-[2px] bg-[#170808] text-[13px] leading-none font-bold text-white">S</div>
        <span className="ml-[14px]">周三上午1:40</span>
        <span className="ml-[17px]">李 思涵</span>
        <svg className="ml-[21px]" width="15" height="15" viewBox="0 0 15 15" fill="none" stroke="#2a1512" strokeWidth="1.400"><circle cx="6" cy="6" r="5" /><path d="M10 10l4.500 4.500" /></svg>
        <svg className="ml-[15px]" width="17" height="12" viewBox="0 0 17 12" fill="#2a1512"><path d="M0 0h2v2H0ZM4 0h13v2H4ZM0 5h2v2H0ZM4 5h13v2H4ZM0 10h2v2H0ZM4 10h13v2H4Z" /></svg>
      </div>
    </div>
  );
}

const dockIcons: ReactNode[] = [
  <g key="finder">
    <rect x="3" y="3" width="34" height="34" rx="3" fill="#dff1fb" />
    <path d="M6 3h14c-2 8-3 12-3 18h5c0 5 .5 10 1 16H6a3 3 0 0 1-3-3V6a3 3 0 0 1 3-3Z" fill="#2c9bea" />
    <path d="M8 26c6 5 18 5 25 0" fill="none" stroke="#1b3f62" strokeWidth="1.200" />
    <path d="M12 12v5M28 12v5" stroke="#1b3f62" strokeWidth="1.600" />
  </g>,
  <g key="store">
    <circle cx="20" cy="21" r="18" fill="#2d84e8" stroke="#dfe9f5" strokeWidth="1.200" />
    <path d="M16 9l12 21M24 9L12 30M9 25h22" stroke="#fff" strokeWidth="2.600" />
  </g>,
  <g key="safari">
    <circle cx="20" cy="21" r="18" fill="#e6edf3" />
    <circle cx="20" cy="21" r="15.500" fill="#3f9bec" />
    <path d="M30 10L17 19l6 4Z" fill="#ea3a3a" />
    <path d="M10 32l7-13 6 4Z" fill="#f2f2f2" />
  </g>,
  <g key="mail">
    <path d="M4 9L30 2l8 29-26 8Z" fill="#f2efe6" />
    <path d="M7 11l21-6 6 24-21 6Z" fill="#8ab4e6" />
    <path d="M12 14l8 8 9 1-7 3-3 3-3-7Z" fill="#7a5a35" />
    <circle cx="31" cy="32" r="7" fill="#6e7f94" opacity="0.5" />
  </g>,
  <g key="music">
    <circle cx="20" cy="21" r="18" fill="#f2f2f2" />
    <circle cx="20" cy="21" r="16.500" fill="#ec1c34" />
    <path d="M16 12l13-3v17h-2.500V14l-8 2v13h-2.500Z" fill="#fff" />
    <ellipse cx="15" cy="29" rx="3.500" ry="3" fill="#fff" />
    <ellipse cx="25.500" cy="26" rx="3.500" ry="3" fill="#fff" />
  </g>,
  <g key="prefs">
    <rect x="1" y="3" width="38" height="36" rx="3" fill="#a8aaac" />
    <circle cx="20" cy="21" r="15" fill="#404244" />
    <circle cx="20" cy="21" r="10" fill="none" stroke="#9a9c9e" strokeWidth="3" />
    <path d="M20 21V11M20 21L11 27M20 21l9 6" stroke="#9a9c9e" strokeWidth="3" />
  </g>,
  <g key="parallels">
    <rect x="1" y="3" width="40" height="27" rx="2" fill="#e4e6e8" />
    <rect x="3" y="5" width="36" height="21" fill="#2d8be0" />
    <path d="M15 10l5-1v5l-5 1ZM21 9l5-1v5l-5 1ZM15 16l5-1v5l-5 1ZM21 15l5-1v5l-5 1Z" fill="#f2c230" />
    <path d="M15 33h12l2 4H13Z" fill="#c8cacc" />
    <rect x="25" y="-1" width="5" height="40" rx="2" fill="#f00000" />
    <rect x="34" y="-1" width="5" height="40" rx="2" fill="#f00000" />
  </g>,
  <g key="qq">
    <ellipse cx="20" cy="27" rx="15" ry="13" fill="#111" />
    <ellipse cx="20" cy="12" rx="11" ry="12" fill="#111" />
    <ellipse cx="20" cy="29" rx="10" ry="10" fill="#fff" />
    <circle cx="15.500" cy="10" r="3" fill="#fff" />
    <circle cx="24.500" cy="10" r="3" fill="#fff" />
    <circle cx="15.500" cy="10" r="1.300" fill="#111" />
    <circle cx="24.500" cy="10" r="1.300" fill="#111" />
    <path d="M12 15h16l-8 5Z" fill="#f7a823" />
    <path d="M6 19c8 5 20 5 28 0l1 4-6 3 1 7-5-1-1-5c-5 1-8 0-14-3Z" fill="#e8161c" />
  </g>,
  <g key="bars">
    <rect x="0" y="9" width="7" height="25" fill="#4f6272" />
    <rect x="11" y="9" width="7" height="25" fill="#4f6272" />
    <rect x="22" y="9" width="7" height="25" fill="#4f6272" />
    <rect x="22" y="26" width="7" height="8" fill="#3c96de" />
    <rect x="33" y="9" width="7" height="25" fill="#66798a" />
  </g>,
  <g key="term">
    <rect x="2" y="4" width="37" height="32" rx="2" fill="#e2e2e2" />
    <rect x="3" y="5" width="35" height="30" fill="#232323" />
    <path d="M7 10l4 2-4 2M12 16h6" stroke="#fff" fill="none" strokeWidth="1.200" />
  </g>,
  <g key="steam">
    <circle cx="20" cy="21" r="18" fill="#133a60" />
    <path d="M3 24l13 5a5 5 0 0 0 9-2l7-5a7 7 0 1 0-8-8l-5 7a6 6 0 0 0-4 1L3 18Z" fill="#e8edf2" />
    <circle cx="27" cy="15" r="4.500" fill="#133a60" />
  </g>,
  <g key="cal">
    <path d="M3 9L33 2l5 29-30 7Z" fill="#f6f6f6" stroke="#c9c9c9" strokeWidth="0.600" />
    <path d="M3 9L33 2l1 6-30 7Z" fill="#e84040" />
    <text x="17" y="10" fill="#fff" fontSize="6" fontFamily="Noto Sans CJK SC, sans-serif" transform="rotate(-12 17 10)">6月</text>
    <text x="11" y="32" fill="#222" fontSize="17" fontFamily="Liberation Sans, sans-serif" transform="rotate(-12 11 32)">10</text>
  </g>,
  <g key="things">
    <rect x="3" y="3" width="34" height="35" rx="4" fill="#1e6ec4" />
    <rect x="3" y="3" width="34" height="6" rx="2" fill="#4aa5ec" />
    <rect x="8" y="8" width="24" height="19" fill="#fafafa" />
    <path d="M14 17l4 4 8-9" fill="none" stroke="#222" strokeWidth="2.200" />
    <path d="M8 27h24v7H8Z" fill="#888" />
  </g>,
  <g key="sublime">
    <path d="M7 3h26l5 32H2Z" fill="#4b4a4a" />
    <rect x="2" y="33" width="36" height="6" rx="1" fill="#ececec" />
    <path d="M26 11c-3-2-11-1-11 4 0 4 9 2 9 5 0 3-6 2-9 0" fill="none" stroke="#f08a1d" strokeWidth="3" />
  </g>,
  <g key="photos">
    <circle cx="20" cy="21" r="18" fill="#f0f0f0" />
    <ellipse cx="20" cy="13" rx="4.500" ry="7.500" fill="#f6a623" />
    <ellipse cx="20" cy="29" rx="4.500" ry="7.500" fill="#7a5fd0" />
    <ellipse cx="12" cy="21" rx="7.500" ry="4.500" fill="#e84b8a" />
    <ellipse cx="28" cy="21" rx="7.500" ry="4.500" fill="#6cc04a" />
    <ellipse cx="14.500" cy="15.500" rx="4.500" ry="7" transform="rotate(-45 14.500 15.500)" fill="#ea5a3a" opacity="0.85" />
    <ellipse cx="25.500" cy="15.500" rx="4.500" ry="7" transform="rotate(45 25.500 15.500)" fill="#e8d430" opacity="0.85" />
    <ellipse cx="14.500" cy="26.500" rx="4.500" ry="7" transform="rotate(45 14.500 26.500)" fill="#b45ac8" opacity="0.85" />
    <ellipse cx="25.500" cy="26.500" rx="4.500" ry="7" transform="rotate(-45 25.500 26.500)" fill="#3ab0c8" opacity="0.85" />
  </g>,
  <g key="iphoto">
    <path d="M5 6l28-3 3 24-29 4Z" fill="#e4d6b8" />
    <path d="M2 12l28-4 3 24-28 4Z" fill="#f2f2f2" />
    <path d="M4 14l24-3 2 19-24 4Z" fill="#5a86c8" />
    <path d="M5 27l24-5 1 8-24 4Z" fill="#e8e4d8" />
    <circle cx="29" cy="29" r="8" fill="#7a7a6c" stroke="#d2d2c6" strokeWidth="1.500" />
  </g>,
  <g key="x11">
    <ellipse cx="20" cy="25" rx="18" ry="11" fill="none" stroke="#ee6a1f" strokeWidth="3" />
    <path d="M7 3h6l20 35h-6ZM29 3h5L12 38H6Z" fill="#111" />
  </g>,
  <g key="shortcut">
    <path d="M6 1h20l9 9v28H6Z" fill="#f6f6f6" />
    <circle cx="20" cy="22" r="10" fill="#6d8cae" stroke="#bbb" strokeWidth="1.500" />
    <path d="M26 16l-8 5 3 3Z" fill="#d84a3a" />
    <path d="M14 28l4-7 3 3Z" fill="#eee" />
    <path d="M1 39l3-3M1 36v3h3" stroke="#222" fill="none" />
  </g>,
  <g key="sheet">
    <path d="M7 1h20l7 8v30H7Z" fill="#f8f6f4" />
    <rect x="11" y="8" width="9" height="8" fill="#e6e66a" />
    <path d="M11 18h19M11 21h19M11 24h19M11 27h19M11 30h19" stroke="#cfcfcf" strokeWidth="1.500" />
    <path d="M27 1v8h7" fill="#e4dcd8" />
  </g>,
  <g key="shot">
    <rect x="3" y="8" width="34" height="26" fill="#f2f2f2" />
    <rect x="6" y="14" width="28" height="18" fill="#1a1410" />
    <rect x="13" y="18" width="14" height="10" fill="#5a3a1a" />
  </g>,
  <g key="stack">
    <rect x="28" y="8" width="8" height="26" fill="#5cbce8" />
    <path d="M6 1h20l8 8v30H6Z" fill="#f4f4f4" />
    <path d="M6 3v35" stroke="#222" strokeWidth="2" strokeDasharray="1.500 2" />
    <path d="M12 14h16M12 18h14M12 22h16M12 26h12" stroke="#c8c8c8" />
  </g>,
  <g key="folder">
    <path d="M3 9a2 2 0 0 1 2-2h11l3 3h17a2 2 0 0 1 2 2v24a2 2 0 0 1-2 2H5a2 2 0 0 1-2-2Z" fill="#6fb0d8" />
    <path d="M14 20l6-1v6l-6 1ZM21 19l6-1v6l-6 1ZM14 27l6-1v6l-6 1ZM21 26l6-1v6l-6 1Z" fill="#4f90b8" />
  </g>,
  <g key="trash">
    <ellipse cx="20" cy="7" rx="14" ry="4" fill="#555" stroke="#ddd" />
    <path d="M6 7l3 30c3 2 19 2 22 0l3-30c-6 4-22 4-28 0Z" fill="#e8e8ea" opacity="0.9" />
    <path d="M12 5l5 1M22 5l5 2" stroke="#d04040" strokeWidth="1.600" />
  </g>,
];

const dockRunning = [0, 2, 3, 4, 7, 8, 9, 10, 11, 13, 15, 16];

function Dock() {
  return (
    <div className="absolute bottom-0 left-[201px] z-30 flex h-[52px] w-[1038px] rounded-t-[4px] bg-[linear-gradient(90deg,#a85252,#a85a70_22%,#b06cc0_37%,#9a5a92_50%,#8a5478_70%,#c068b0_87%,#a85f9f)] pl-[3px]">
      {dockIcons.map((icon, i) => (
        <React.Fragment key={i}>
          {i === 17 && (
            <div className="flex w-[20px] shrink-0 justify-center pt-[7px]">
              <i className="h-[38px] w-px bg-[#3d2438]" />
            </div>
          )}
          <div className="relative flex h-full w-[44px] shrink-0 justify-center pt-[3px]">
            <svg width="40" height="40" viewBox="0 0 40 40" className="block overflow-visible">
              {icon}
            </svg>
            {i === 1 && (
              <span className="absolute top-[4px] right-[2px] flex h-[12px] w-[12px] items-center justify-center rounded-full bg-[#f01010] text-[9px] leading-none font-bold text-white">
                6
              </span>
            )}
            {dockRunning.includes(i) && <i className="absolute bottom-[2px] h-[3px] w-[3px] rounded-full bg-[#1a0a14]" />}
            {i === 20 && <i className="absolute bottom-[1px] h-[4px] w-[40px] rounded-full border border-[#1a0a14]" />}
          </div>
        </React.Fragment>
      ))}
    </div>
  );
}

export default function App() {
  return (
    <div className="relative h-[900px] w-[1440px] overflow-hidden bg-[linear-gradient(90deg,#5e080c,#3a0508_3%,#2c0306_12%,#6a0c10_16%,#4a1c48_60%,#4a1c48)] [font-family:'Liberation_Sans','Noto_Sans_CJK_SC',sans-serif]">
      {/* desktop curtains behind everything */}
      <div className="absolute inset-y-0 left-0 w-[202px] bg-[repeating-linear-gradient(92deg,rgba(120,10,20,0.35)_0px,rgba(20,0,0,0.35)_7px,rgba(120,10,20,0.15)_15px)]" />
      <div className="absolute top-[215px] left-[11px] text-[12px] font-bold text-[#eee]">m</div>
      <div className="absolute top-[438px] left-[11px] text-[13px] font-bold text-[#eee]">4</div>
      <div className="absolute top-[455px] left-[10px] text-[12px] font-bold text-[#ccc]">-4</div>
      <div className="absolute top-[566px] left-[11px] text-[13px] font-bold text-[#eee]">2</div>

      {/* edge of another window peeking out above the main one */}
      <div className="absolute top-[23px] left-[188px] h-[10px] w-[1252px] rounded-t-[4px] bg-[#e8e8e8]" />
      <BackWindow />
      <Window />
      <MenuBar />
      <Dock />

      {/* mouse pointer */}
      <svg width="12" height="18" viewBox="0 0 12 18" className="absolute top-[2px] left-[447px] z-40">
        <path d={arrow} fill="#111" stroke="#fff" strokeWidth="0.8" />
      </svg>
    </div>
  );
}
